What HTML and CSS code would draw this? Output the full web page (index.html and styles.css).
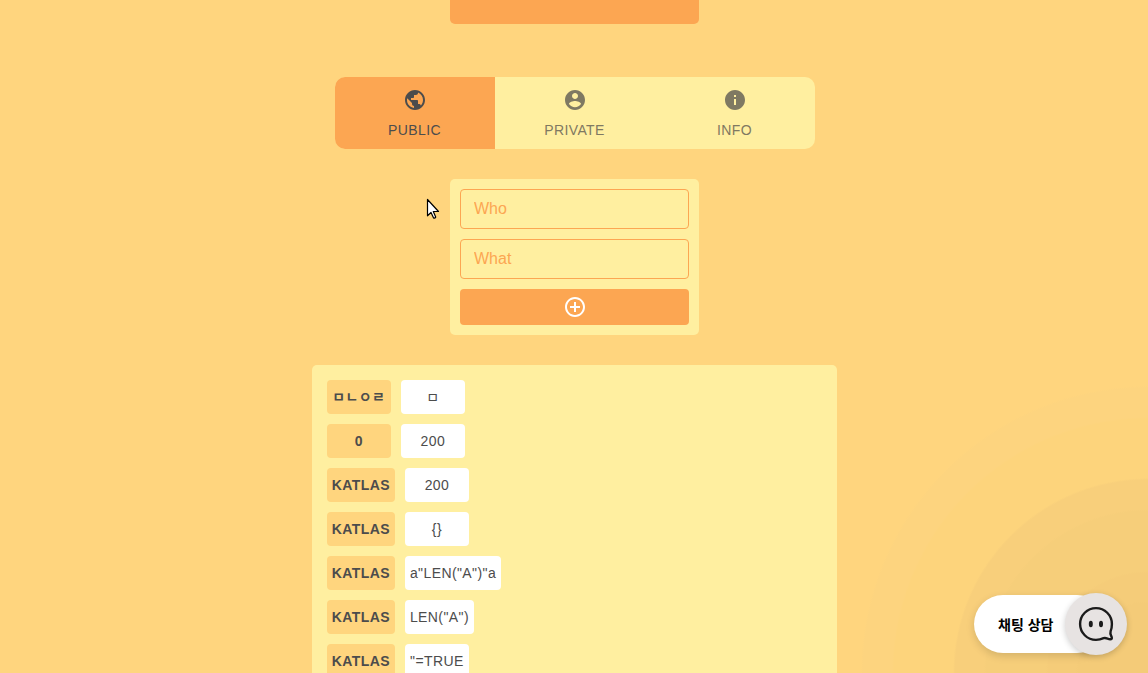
FILE: index.html
```
<!DOCTYPE html>
<html lang="ko">
<head>
<meta charset="utf-8">
<title>Public</title>
<link rel="stylesheet" href="styles.css">
</head>
<body>
<main class="page">
  <div class="banner"></div>

  <nav class="tabs">
    <button class="tab tab-active">
      <svg class="icon" viewBox="0 0 24 24"><path d="M12 2C6.48 2 2 6.48 2 12s4.48 10 10 10 10-4.48 10-10S17.52 2 12 2zm-1 17.93c-3.95-.49-7-3.85-7-7.93 0-.62.08-1.21.21-1.79L9 15v1c0 1.1.9 2 2 2v1.93zm6.9-2.54c-.26-.81-1-1.39-1.9-1.39h-1v-3c0-.55-.45-1-1-1H8v-2h2c.55 0 1-.45 1-1V7h2c1.1 0 2-.9 2-2v-.41c2.93 1.19 5 4.06 5 7.41 0 2.08-.8 3.97-2.1 5.39z"/></svg>
      <span class="tab-label">PUBLIC</span>
    </button>
    <button class="tab">
      <svg class="icon" viewBox="0 0 24 24"><path d="M12 2C6.48 2 2 6.48 2 12s4.48 10 10 10 10-4.48 10-10S17.52 2 12 2zm0 3c1.66 0 3 1.34 3 3s-1.34 3-3 3-3-1.34-3-3 1.34-3 3-3zm0 14.2c-2.5 0-4.71-1.28-6-3.22.03-1.99 4-3.08 6-3.08 1.99 0 5.97 1.09 6 3.08-1.29 1.94-3.5 3.22-6 3.22z"/></svg>
      <span class="tab-label">PRIVATE</span>
    </button>
    <button class="tab">
      <svg class="icon" viewBox="0 0 24 24"><path d="M12 2C6.48 2 2 6.48 2 12s4.48 10 10 10 10-4.48 10-10S17.52 2 12 2zm1 15h-2v-6h2v6zm0-8h-2V7h2v2z"/></svg>
      <span class="tab-label">INFO</span>
    </button>
  </nav>

  <form class="form">
    <input class="field" placeholder="Who">
    <input class="field" placeholder="What">
    <button class="add" type="button" aria-label="Add">
      <svg class="icon" viewBox="0 0 24 24"><path d="M13 7h-2v4H7v2h4v4h2v-4h4v-2h-4V7zm-1-5C6.48 2 2 6.48 2 12s4.48 10 10 10 10-4.48 10-10S17.52 2 12 2zm0 18c-4.41 0-8-3.59-8-8s3.59-8 8-8 8 3.59 8 8-3.59 8-8 8z"/></svg>
    </button>
  </form>

  <section class="list">
    <div class="row"><span class="chip who">ㅁㄴㅇㄹ</span><span class="chip what">ㅁ</span></div>
    <div class="row"><span class="chip who">0</span><span class="chip what">200</span></div>
    <div class="row"><span class="chip who">KATLAS</span><span class="chip what">200</span></div>
    <div class="row"><span class="chip who">KATLAS</span><span class="chip what">{}</span></div>
    <div class="row"><span class="chip who">KATLAS</span><span class="chip what">a"LEN("A")"a</span></div>
    <div class="row"><span class="chip who">KATLAS</span><span class="chip what">LEN("A")</span></div>
    <div class="row"><span class="chip who">KATLAS</span><span class="chip what">"=TRUE</span></div>
  </section>
</main>

<div class="chat-glow"></div>
<div class="chat">
  <span class="chat-label">채팅 상담</span>
  <span class="chat-button">
    <svg class="chat-icon" viewBox="0 0 62 62">
      <path d="M46.9 31A15.9 15.9 0 1 0 31 46.9C34 46.9 36.500 46.200 38.600 45.200C40.800 44.300 42.600 45.900 45.200 46.200Q47.400 46.200 46.700 44.200C46 42.300 44.800 40.600 45.600 38.300C46.600 35.900 46.900 33.300 46.900 31Z" fill="none" stroke="#1b1b1b" stroke-width="2.4" stroke-linejoin="round"/>
      <ellipse cx="25.8" cy="31" rx="2" ry="3.3" fill="#1b1b1b"/>
      <ellipse cx="36" cy="31" rx="2" ry="3.3" fill="#1b1b1b"/>
    </svg>
  </span>
</div>

<svg class="cursor" viewBox="0 0 14 22"><path d="M1.5 1.5V17.8L5 14.5L7.6 20Q8.9 20.6 9.7 19.1L7.3 13.5H12.5Z" fill="#fff" stroke="#000" stroke-width="1.2" stroke-linejoin="round"/></svg>
</body>
</html>
```

FILE: styles.css
```
* {
  box-sizing: border-box;
}

body {
  margin: 0;
  height: 673px;
  overflow: hidden;
  background: #ffd57e;
  color: #4c4c4c;
  font-family: "Liberation Sans", "Noto Sans CJK KR", sans-serif;
}

button,
input {
  font: inherit;
  color: inherit;
  border: 0;
  margin: 0;
}

.page {
  display: flex;
  flex-direction: column;
  align-items: center;
  height: 673px;
  padding-left: 1px;
  overflow: hidden;
}

.banner {
  flex: none;
  width: 249px;
  height: 24px;
  background: #fca652;
  border-radius: 0 0 5px 5px;
}

.tabs {
  flex: none;
  display: flex;
  width: 480px;
  height: 72px;
  margin: 53px 0 30px 1px;
  border-radius: 10px;
  overflow: hidden;
  background: #ffefa0;
}

.tab {
  flex: 1;
  display: flex;
  flex-direction: column;
  align-items: center;
  gap: 6px;
  padding: 11px 0 0;
  background: none;
  color: #7f7962;
  font-size: 14px;
  line-height: 24px;
  letter-spacing: 0.4px;
}

.tab-active {
  background: #fca652;
  color: #4c4c4c;
}

.tab-label {
  margin-right: 1px;
}

.icon {
  display: block;
  width: 24px;
  height: 24px;
  fill: currentColor;
}

.form {
  flex: none;
  display: flex;
  flex-direction: column;
  gap: 10px;
  width: 249px;
  padding: 10px;
  margin-bottom: 30px;
  border-radius: 5px;
  background: #ffefa0;
}

.field {
  width: 100%;
  height: 40px;
  padding: 0 13px;
  border: 1px solid #fca652;
  border-radius: 4px;
  background: transparent;
  font-size: 16px;
}

.field::placeholder {
  color: #fca652;
  opacity: 1;
}

.add {
  display: flex;
  justify-content: center;
  align-items: center;
  height: 36px;
  padding: 0;
  border-radius: 4px;
  background: #fca652;
  color: #fff;
}

.list {
  flex: none;
  display: flex;
  flex-direction: column;
  gap: 10px;
  width: 525px;
  padding: 15px;
  margin-right: 0.4px;
  border-radius: 5px;
  background: #ffefa0;
}

.row {
  display: flex;
  gap: 10px;
}

.chip {
  min-width: 64px;
  height: 34px;
  padding: 5px;
  border-radius: 4px;
  font-size: 14px;
  line-height: 24px;
  letter-spacing: 0.4px;
  text-align: center;
  white-space: nowrap;
}

.who {
  background: #ffd57e;
  font-weight: 700;
}

.what {
  background: #fff;
}

.chat-glow {
  position: absolute;
  right: 0;
  bottom: 0;
  width: 300px;
  height: 300px;
  background: radial-gradient(
    circle at 100% 100%,
    #f4cb78 70px,
    #f5cc79 72px 100px,
    #f6ce7a 102px 162px,
    #f8cf7b 164px 193px,
    #fdd47c 195px 254px,
    #fdd47f 256px 285px,
    #ffd57e 287px
  );
}

.chat {
  position: absolute;
  right: 21px;
  bottom: 18px;
  display: flex;
  align-items: center;
  width: 153px;
  height: 62px;
}

.chat-label {
  width: 132px;
  height: 58px;
  padding-left: 24px;
  border-radius: 29px;
  background: #fff;
  box-shadow: 0 3px 8px rgba(0, 0, 0, 0.14);
  color: #000;
  font: 700 14px/58px "Noto Sans CJK KR", sans-serif;
}

.chat-button {
  flex: none;
  width: 62px;
  height: 62px;
  margin-left: -41px;
  border-radius: 50%;
  background: #e7e3e2;
  box-shadow: 0 2px 6px rgba(0, 0, 0, 0.2);
}

.chat-icon {
  display: block;
}

.cursor {
  position: absolute;
  left: 426px;
  top: 198px;
  width: 14px;
  height: 22px;
}
```
